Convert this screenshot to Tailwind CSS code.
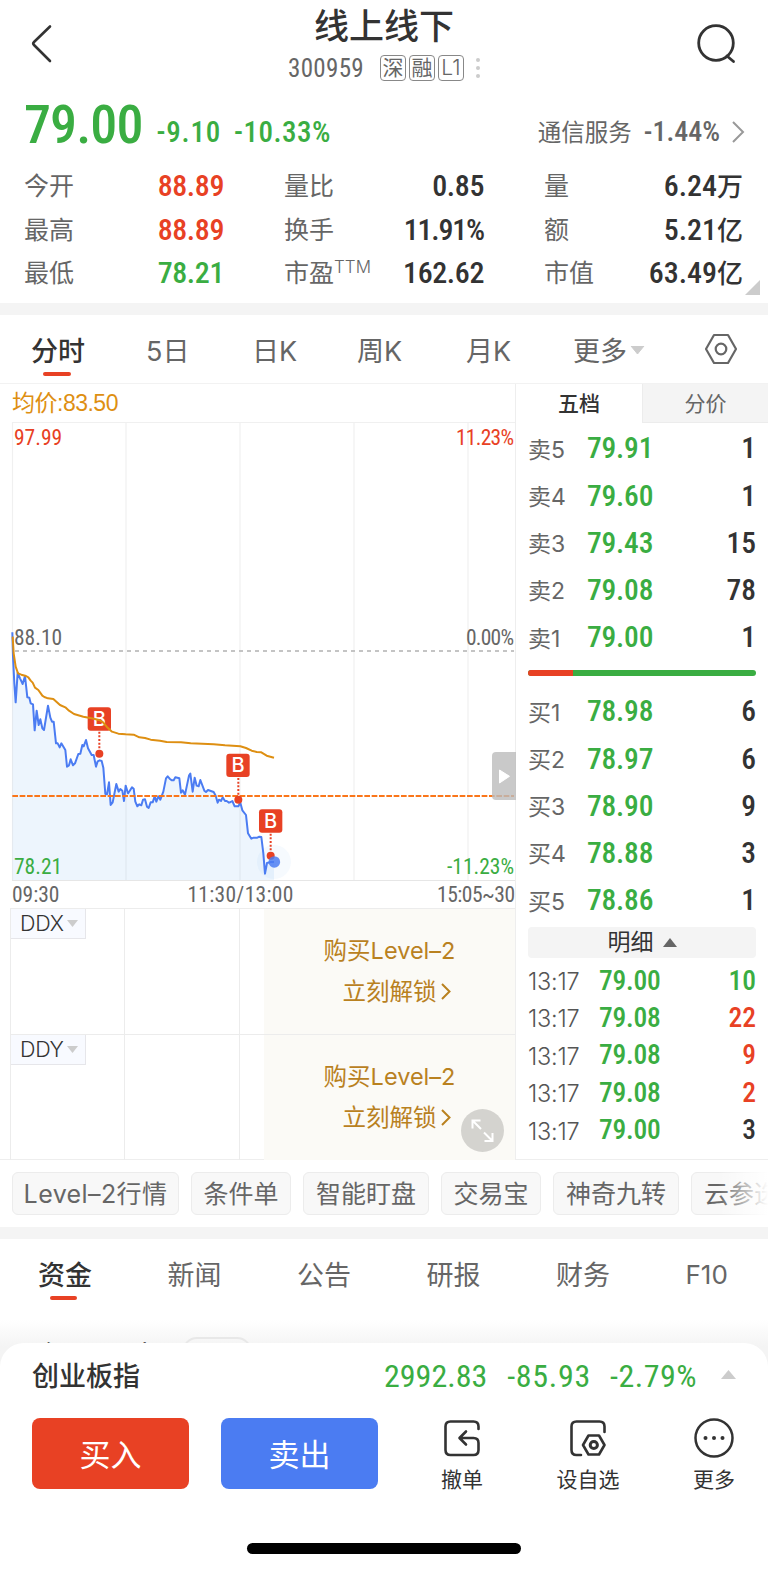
<!DOCTYPE html>
<html lang="zh-CN">
<head>
  <meta charset="UTF-8" />
  <meta name="viewport" content="width=device-width, initial-scale=1.0" />
  <title>线上线下 300959</title>
  <script src="https://cdn.jsdelivr.net/npm/@tailwindcss/browser@4"></script>
</head>
<body class="bg-white font-['Inter','Noto_Sans_CJK_SC',sans-serif] text-[#333]">
  <div class="w-[768px] h-[1570px] overflow-hidden relative">

    <!-- Kopf -->
    <header class="h-[90px] flex justify-between items-start pl-[30px] pr-[32px]">
      <svg class="w-[24px] h-[40px] mt-6" viewBox="0 0 24 40" fill="none" stroke="#333" stroke-width="2.6" stroke-linecap="round" stroke-linejoin="round"><path d="M20 2.500 L4 18 Q2.500 19.500 4 21 L20 37" /></svg>
      <div class="flex flex-col items-center ml-[18px]">
        <h1 class="text-[35px] leading-[52px] font-medium">线上线下</h1>
        <div class="flex items-center h-8 text-[#666]">
          <span class="font-['Roboto_Condensed'] text-[25px] tracking-[0.3px] pt-0.5 mr-[16px]">300959</span>
          <div class="flex gap-[3px] text-[21px] leading-[24px]">
            <span class="w-[26px] h-[26px] border border-[#888] rounded-[4px] flex justify-center">深</span>
            <span class="w-[26px] h-[26px] border border-[#888] rounded-[4px] flex justify-center">融</span>
            <span class="w-[26px] h-[26px] border border-[#888] rounded-[4px] flex justify-center font-light">L1</span>
          </div>
          <div class="flex flex-col gap-1 ml-[12px]">
            <i class="size-1 rounded-full bg-[#ccc]"></i>
            <i class="size-1 rounded-full bg-[#ccc]"></i>
            <i class="size-1 rounded-full bg-[#ccc]"></i>
          </div>
        </div>
      </div>
      <svg class="w-[40px] h-[40px] mt-6" viewBox="0 0 40 40" fill="none" stroke="#333" stroke-width="2.8" stroke-linecap="round"><circle cx="20" cy="19" r="17.3" /><path d="M31 32 L37.500 37.500" /></svg>
    </header>

    <!-- Kurs -->
    <section class="h-[213px] pl-[24px] pr-[25px] relative">
      <div class="h-[74px] flex items-end font-['Roboto_Condensed','Noto_Sans_CJK_SC',sans-serif] font-medium text-[#3aad42]">
        <span class="text-[54px] leading-[78px] tracking-[-0.9px]">79.00</span>
        <span class="text-[29px] leading-[64px] ml-[14px] tracking-[0.8px]">-9.10</span>
        <span class="text-[29px] leading-[64px] ml-[13px] tracking-[0.5px]">-10.33%</span>
        <div class="ml-auto flex items-center h-[64px] text-[#666] -mr-[2px]">
          <span class="text-[23.5px] font-normal pt-[3px]">通信服务</span>
          <span class="text-[28px] ml-[12px]">-1.44%</span>
          <svg class="w-[13px] h-[22px] ml-[12px]" viewBox="0 0 13 22" fill="none" stroke="#999" stroke-width="2"><path d="M1 1 L11 11 L1 21" /></svg>
        </div>
      </div>
      <div id="stats" class="grid grid-cols-[260px_260px_199px] auto-rows-[43.500px]"></div>
      <svg class="absolute right-2 bottom-[8px] w-[15px] h-[15px]" viewBox="0 0 15 15"><path d="M15 0 V15 H0 Z" fill="#ccc" /></svg>
    </section>

    <div class="h-3 bg-[#f4f4f4]"></div>

    <nav class="h-[69px] flex items-start pl-[31px] pt-[16px] text-[27px] leading-[42px] text-[#666] border-b border-[#f2f2f2]">
      <div class="w-[115px]">
        <div class="w-[54px] font-medium text-[#333]">分时<i class="block w-7 h-1 ml-[12px] -mt-px rounded-full bg-[#e84124]"></i></div>
      </div>
      <span class="w-[106px]">5日</span>
      <span class="w-[105px]">日K</span>
      <span class="w-[109px]">周K</span>
      <span class="w-[107px]">月K</span>
      <div class="w-[132px] flex items-center gap-[3px]">更多<svg class="w-[15px] h-[9px] -mt-[3px]" viewBox="0 0 15 9"><path d="M1 0 H14 L7.500 8 Z" fill="#ccc" stroke="#ccc" stroke-linejoin="round" /></svg></div>
      <svg class="w-[32px] h-[32px] mt-[2px]" viewBox="0 0 32 32" fill="none" stroke="#666" stroke-width="2.2" stroke-linejoin="round"><path d="M9 2 H23 L31 16 L23 30 H9 L1 16 Z" /><circle cx="16" cy="16" r="5.300" /></svg>
    </nav>

    <main class="flex h-[776px] border-b border-[#eee]">
      <!-- Chart -->
      <section class="w-[516px] border-r border-[#eee]">
        <p class="h-[38px] pl-3 text-[23px] leading-[38px] tracking-[-0.5px] text-[#de8f12] font-['Liberation_Sans','Noto_Sans_CJK_SC',sans-serif]">均价:83.50</p>
        <svg class="block w-[516px] h-[486px]" viewBox="0 422 516 486" font-family="Roboto Condensed" font-size="21.500">
          <g stroke="#f0f0f0" stroke-width="1.200" fill="none">
            <path d="M12.500 422 V881 M126 422 V881 M240 422 V881 M354 422 V881 M468 422 V881 M12 422.500 H515" />
            <path d="M12 880.500 H515" stroke="#e6e6e6" />
          </g>
          <path d="M15 651 H514" stroke="#c4c4c4" stroke-width="1.800" stroke-dasharray="4 4" />
          <g transform="translate(0 620) scale(.33333)" fill="none" stroke-linejoin="round">
            <path fill="#4b9ae8" fill-opacity=".1" d="M37 37 L39 110 43 190 47 247 53 158 60 175 68 192 75 168 82 232 88 233 92 250 99 253 104 331 110 272 116 315 121 298 127 325 132 330 144 257 151 293 156 305 161 305 168 370 173 370 179 382 184 370 196 390 201 440 207 436 212 418 219 436 225 430 235 402 241 401 247 375 251 379 258 360 264 385 275 405 281 405 288 440 293 424 299 421 305 423 310 443 316 522 321 523 327 487 332 555 338 547 349 492 356 515 361 507 367 512 372 543 377 497 384 520 389 513 396 502 401 506 406 545 412 559 418 553 424 556 429 539 435 538 441 560 446 564 452 547 458 547 464 529 469 545 475 529 481 539 490 515 498 475 503 469 509 476 515 481 521 481 526 472 538 475 543 518 548 511 555 524 567 467 571 461 578 515 584 473 590 497 596 499 601 480 613 512 618 516 624 510 641 516 647 527 653 548 657 539 663 543 668 532 675 543 680 543 687 548 692 546 697 543 704 559 715 559 721 548 727 571 738 585 744 640 754 656 761 653 772 653 778 650 784 651 790 700 795 761 801 729 812 726 822 726 V780 H37 Z" />
            <circle cx="822" cy="726" r="51" fill="#4b9ae8" fill-opacity=".05" />
            <path stroke="#4b7cf2" stroke-width="6" d="M37 37 L39 110 43 190 47 247 53 158 60 175 68 192 75 168 82 232 88 233 92 250 99 253 104 331 110 272 116 315 121 298 127 325 132 330 144 257 151 293 156 305 161 305 168 370 173 370 179 382 184 370 196 390 201 440 207 436 212 418 219 436 225 430 235 402 241 401 247 375 251 379 258 360 264 385 275 405 281 405 288 440 293 424 299 421 305 423 310 443 316 522 321 523 327 487 332 555 338 547 349 492 356 515 361 507 367 512 372 543 377 497 384 520 389 513 396 502 401 506 406 545 412 559 418 553 424 556 429 539 435 538 441 560 446 564 452 547 458 547 464 529 469 545 475 529 481 539 490 515 498 475 503 469 509 476 515 481 521 481 526 472 538 475 543 518 548 511 555 524 567 467 571 461 578 515 584 473 590 497 596 499 601 480 613 512 618 516 624 510 641 516 647 527 653 548 657 539 663 543 668 532 675 543 680 543 687 548 692 546 697 543 704 559 715 559 721 548 727 571 738 585 744 640 754 656 761 653 772 653 778 650 784 651 790 700 795 761 801 729 812 726 822 726" />
            <path stroke="#fa761a" stroke-width="6.500" stroke-dasharray="17 5" d="M37 528 H1542" />
            <!-- Kaufmarken -->
            <g fill="#e84124">
              <rect x="263" y="262" width="70" height="70" rx="9" />
              <rect x="679" y="401" width="70" height="70" rx="9" />
              <rect x="777" y="568" width="70" height="70" rx="9" />
              <circle cx="298" cy="401" r="12" />
              <circle cx="715" cy="539" r="12" />
              <circle cx="812" cy="707" r="12" />
            </g>
            <path stroke="#e84124" stroke-width="6" stroke-dasharray="6 5" d="M298 335 V392 M715 474 V530 M812 641 V698" />
            <g fill="#fff" font-family="Inter" font-size="60" font-weight="500" text-anchor="middle">
              <text x="298" y="318">B</text>
              <text x="714" y="457">B</text>
              <text x="812" y="624">B</text>
            </g>
            <path stroke="#de8f12" stroke-width="6" d="M38 50 L41 100 47 140 54 160 64 164 78 168 85 172 92 182 98 188 105 203 115 210 127 227 133 231 144 235 160 237 180 255 196 262 207 272 222 282 250 290 275 295 300 301 308 306 320 320 336 335 355 341 377 343 401 344 418 352 435 354 452 359 480 362 500 366 543 367 572 370 641 373 675 376 721 379 738 384 755 392 770 396 784 397 800 407 822 413" />
            <circle cx="823" cy="726" r="17.500" fill="#4b7cf2" fill-opacity=".85" />
          </g>
          <path d="M516 752 H496 Q492 752 492 756 V796 Q492 800 496 800 H516 Z" fill="#bbb" fill-opacity=".8" />
          <path d="M499.500 770 V783 L509.500 776.300 Z" fill="#fff" stroke="#fff" stroke-linejoin="round" />
          <text x="14" y="444.500" fill="#e84124">97.99</text>
          <text x="514" y="444.500" fill="#e84124" text-anchor="end" textLength="58">11.23%</text>
          <text x="14" y="644.500" fill="#666">88.10</text>
          <text x="514" y="644.500" fill="#666" text-anchor="end" textLength="48">0.00%</text>
          <text x="14" y="874" fill="#3aad42">78.21</text>
          <text x="514" y="874" fill="#3aad42" text-anchor="end">-11.23%</text>
          <text x="12" y="901.500" fill="#666">09:30</text>
          <text x="240.500" y="901.500" fill="#666" text-anchor="middle" letter-spacing=".3">11:30/13:00</text>
          <text x="515" y="901.500" fill="#666" text-anchor="end" textLength="78">15:05~30</text>
        </svg>

        <!-- Level-2 Indikatoren -->
        <div class="ml-[10px] border-l border-t border-[#ececec] h-[126px] flex">
          <div class="w-[114px] border-r border-[#ececec]">
            <div class="w-[75px] h-[30px] bg-[#f8faff] border-r border-b border-[#e6e6ea] flex items-center gap-[3px] pl-[9px] text-[21.5px] tracking-[-0.3px] font-light">DDX<svg class="w-[11px] h-[7px]" viewBox="0 0 11 7"><path d="M0 0 H11 L5.500 7 Z" fill="#ccc" /></svg></div>
          </div>
          <div class="w-[115px] border-r border-[#ececec]"></div>
          <div class="flex-1 ml-[24px] bg-[#fbfaf6] pt-[21px] text-center text-[23.5px] leading-[41px] text-[#b9811f]">
            <p>购买Level–2</p>
            <p class="pl-[14px]">立刻解锁<svg class="inline w-[10px] h-[17px] ml-1 -mt-1" viewBox="0 0 10 17" fill="none" stroke="#b9811f" stroke-width="2"><path d="M1 1 L8.500 8.500 L1 16" /></svg></p>
          </div>
        </div>
        <div class="ml-[10px] border-l border-t border-[#ececec] h-[126px] flex relative">
          <div class="w-[114px] border-r border-[#ececec]">
            <div class="w-[75px] h-[30px] bg-[#f8faff] border-r border-b border-[#e6e6ea] flex items-center gap-[3px] pl-[9px] text-[21.5px] tracking-[-0.3px] font-light">DDY<svg class="w-[11px] h-[7px]" viewBox="0 0 11 7"><path d="M0 0 H11 L5.500 7 Z" fill="#ccc" /></svg></div>
          </div>
          <div class="w-[115px] border-r border-[#ececec]"></div>
          <div class="flex-1 ml-[24px] bg-[#fbfaf6] pt-[21px] text-center text-[23.5px] leading-[41px] text-[#b9811f]">
            <p>购买Level–2</p>
            <p class="pl-[14px]">立刻解锁<svg class="inline w-[10px] h-[17px] ml-1 -mt-1" viewBox="0 0 10 17" fill="none" stroke="#b9811f" stroke-width="2"><path d="M1 1 L8.500 8.500 L1 16" /></svg></p>
          </div>
          <svg class="absolute right-[11px] bottom-[8px] w-[43px] h-[43px]" viewBox="0 0 43 43" fill="none" stroke="#fff" stroke-width="2"><circle cx="21.500" cy="21.500" r="21.500" fill="#d4d3cf" stroke="none" /><path d="M11.500 19.500 V11.500 H19.500 M11.500 11.500 L20 20 M31.500 24 V32 H23.500 M31.500 32 L23 23.500" /></svg>
        </div>
      </section>

      <!-- Orderbuch -->
      <section class="flex-1">
        <div class="flex h-[39px] text-[21px] leading-[40px] text-center">
          <div class="w-[126px] font-medium">五档</div>
          <div class="flex-1 bg-[#f4f4f4] border-l border-b border-[#ececec] text-[#666]">分价</div>
        </div>
        <div class="pl-3 pr-[12px]">
          <div id="asks" class="pt-[2px] h-[246px]"></div>
          <div class="h-[6px] mt-px rounded-full bg-[#3aad42] overflow-hidden"><div class="w-[45px] h-full bg-[#e84124]"></div></div>
          <div id="bids" class="pt-[12px] h-[251px]"></div>
          <div class="h-[31px] rounded-sm bg-[#f4f4f4] flex items-center justify-center gap-[9px] text-[23px]">明细<svg class="w-[14px] h-[9px]" viewBox="0 0 14 9"><path d="M0 9 L7 0 L14 9 Z" fill="#666" /></svg></div>
          <div id="ticks" class="pt-[3px]"></div>
        </div>
      </section>
    </main>

    <div class="h-[67px] pl-3 pt-3 flex gap-3 relative overflow-hidden text-[25px] leading-[42px] text-[#666] whitespace-nowrap">
      <span class="h-[43px] w-[167px] shrink-0 flex justify-center tracking-[0.4px] rounded-md border border-[#ececec] bg-[#f8f8f8]">Level–2行情</span>
      <span class="h-[43px] w-[100px] shrink-0 flex justify-center rounded-md border border-[#ececec] bg-[#f8f8f8]">条件单</span>
      <span class="h-[43px] w-[126px] shrink-0 flex justify-center rounded-md border border-[#ececec] bg-[#f8f8f8]">智能盯盘</span>
      <span class="h-[43px] w-[100px] shrink-0 flex justify-center rounded-md border border-[#ececec] bg-[#f8f8f8]">交易宝</span>
      <span class="h-[43px] w-[126px] shrink-0 flex justify-center rounded-md border border-[#ececec] bg-[#f8f8f8]">神奇九转</span>
      <span class="h-[43px] w-[126px] shrink-0 flex justify-center rounded-md border border-[#ececec] bg-[#f8f8f8]">云参选股</span>
      <div class="absolute right-0 top-0 w-[50px] h-full bg-linear-to-r from-white/0 to-white"></div>
    </div>

    <div class="h-3 bg-[#f4f4f4]"></div>

    <nav class="flex h-[81px] pl-[38px] pt-[16px] text-[27px] leading-[42px] text-[#666]">
      <div class="w-[129.500px]">
        <div class="w-[54px] font-medium text-[#333]">资金<i class="block w-[27px] h-1 ml-[12px] -mt-px rounded-full bg-[#e84124]"></i></div>
      </div>
      <span class="w-[129.500px]">新闻</span>
      <span class="w-[129.500px]">公告</span>
      <span class="w-[129.500px]">研报</span>
      <span class="w-[129.500px]">财务</span>
      <span class="text-[26px] -mt-px">F10</span>
    </nav>
    <div class="h-[60px] flex pl-[33px] pt-[14px] bg-linear-to-b from-white to-[#f4f4f4] to-45%">
      <span class="text-[30px] leading-[44px] tracking-[0.3px]">个股异动</span>
      <span class="w-[70px] h-[30px] mt-[3px] ml-[28px] rounded-full border-2 border-[#e8e8e8]"></span>
    </div>

    <!-- Fußleiste -->
    <footer class="absolute bottom-0 left-0 w-[768px] h-[227px] rounded-t-[24px] bg-white flex flex-col">
      <div class="h-[66px] pl-8 pr-[32px] flex items-center font-['Roboto_Condensed','Noto_Sans_CJK_SC',sans-serif] text-[32px] text-[#3aad42]">
        <span class="text-[27px] font-medium text-[#333] pt-0.5 mr-auto">创业板指</span>
        <span>2992.83</span>
        <span class="ml-[20px] tracking-[0.7px]">-85.93</span>
        <span class="ml-[19px] tracking-[0.5px]">-2.79%</span>
        <svg class="w-[15px] h-[9px] ml-[24px] -mt-[3px]" viewBox="0 0 15 9"><path d="M0 9 L7.500 0 L15 9 Z" fill="#ccc" /></svg>
      </div>
      <div class="flex pl-8 pt-2 text-[21px] leading-[30px]">
        <button class="w-[157px] h-[71px] mt-px pt-0.5 rounded-lg bg-[#e84124] text-white text-[31px]">买入</button>
        <button class="w-[157px] h-[71px] mt-px pt-0.5 ml-8 rounded-lg bg-[#4b7cf2] text-white text-[31px]">卖出</button>
        <div class="w-[84px] ml-[42px] flex flex-col items-center">
          <svg class="w-[40px] h-[40px] mt-px mb-[7px]" viewBox="0 0 40 40" fill="none" stroke="#333" stroke-width="2.6" stroke-linecap="round" stroke-linejoin="round"><path d="M36.500 11 V8.500 Q36.500 3.500 31.500 3.500 H8.500 Q3.500 3.500 3.500 8.500 V32 Q3.500 37 8.500 37 H31.500 Q36.500 37 36.500 32 V25 Q36.500 20 31.500 20 H18 M24 13.500 L17.500 20 L24 26.500" /></svg>
          撤单
        </div>
        <div class="w-[84px] ml-[42px] flex flex-col items-center">
          <svg class="w-[40px] h-[40px] mt-px mb-[7px]" viewBox="0 0 40 40" fill="none" stroke="#333" stroke-width="2.6" stroke-linecap="round" stroke-linejoin="round"><path d="M36.500 14 V8.500 Q36.500 3.500 31.500 3.500 H8.500 Q3.500 3.500 3.500 8.500 V32 Q3.500 37 8.500 37 H13" /><path d="M20.500 17.500 H31 L36.500 27 L31 36.500 H20.500 L15 27 Z" /><circle cx="25.800" cy="27" r="3.600" stroke-width="3" /></svg>
          设自选
        </div>
        <div class="w-[84px] ml-[42px] flex flex-col items-center">
          <svg class="w-[40px] h-[40px] mt-px mb-[7px]" viewBox="0 0 40 40"><circle cx="20" cy="20" r="18.500" fill="none" stroke="#333" stroke-width="2.500" /><g fill="#333"><circle cx="11.500" cy="20" r="2" /><circle cx="20" cy="20" r="2" /><circle cx="28.500" cy="20" r="2" /></g></svg>
          更多
        </div>
      </div>
      <div class="w-[274px] h-[11px] mt-auto mb-[16px] mx-auto rounded-full bg-black"></div>
    </footer>
  </div>

  <script>
    const RED = "text-[#e84124]";
    const GREEN = "text-[#3aad42]";
    const DARK = "text-[#333]";

    // Kennzahlen: Label, Wert, Einheit, Farbe
    const stats = [
      ["今开", "88.89", "", RED], ["量比", "0.85", "", DARK], ["量", "6.24", "万", DARK],
      ["最高", "88.89", "", RED], ["换手", "11.91%", "", DARK], ["额", "5.21", "亿", DARK],
      ["最低", "78.21", "", GREEN], ["市盈<sup class='text-[17px] font-light -top-[9px]'>TTM</sup>", "162.62", "", DARK], ["市值", "63.49", "亿", DARK]
    ];
    const asks = [["卖5", "79.91", "1"], ["卖4", "79.60", "1"], ["卖3", "79.43", "15"], ["卖2", "79.08", "78"], ["卖1", "79.00", "1"]];
    const bids = [["买1", "78.98", "6"], ["买2", "78.97", "6"], ["买3", "78.90", "9"], ["买4", "78.88", "3"], ["买5", "78.86", "1"]];
    const ticks = [["13:17", "79.00", "10", GREEN], ["13:17", "79.08", "22", RED], ["13:17", "79.08", "9", RED], ["13:17", "79.08", "2", RED], ["13:17", "79.00", "3", DARK]];

    document.getElementById('stats').innerHTML = stats.map(([label, value, unit, color], i) => `
      <div class="flex justify-between items-center ${i % 3 === 2 ? '' : 'pr-[60px]'}">
        <span class="text-[25px] text-[#666] pt-[2px]">${label}</span>
        <span class="font-['Roboto_Condensed','Noto_Sans_CJK_SC',sans-serif] font-medium text-[30px] ${value.includes('%') ? 'tracking-[-1.2px]' : unit ? '' : 'tracking-[-0.4px]'} ${color}">${value}<span class="text-[26px]">${unit}</span></span>
      </div>`).join("");

    const orderRow = ([label, price, amount]) => `
      <div class="h-[47.200px] flex items-center">
        <span class="w-[59px] text-[23px] text-[#666] pt-[3px]">${label}</span>
        <span class="font-['Roboto_Condensed'] font-medium text-[29.500px] tracking-[-0.2px] text-[#3aad42]">${price}</span>
        <span class="font-['Roboto_Condensed'] font-medium text-[29.500px] ml-auto">${amount}</span>
      </div>`;
    document.getElementById('asks').innerHTML = asks.map(orderRow).join("");
    document.getElementById('bids').innerHTML = bids.map(orderRow).join("");

    document.getElementById('ticks').innerHTML = ticks.map(([time, price, amount, color]) => `
      <div class="h-[37.400px] flex items-center">
        <span class="w-[71px] text-[23.500px] font-light tracking-[-0.2px] text-[#555] pt-1">${time}</span>
        <span class="font-['Roboto_Condensed'] font-medium text-[27.500px] tracking-[-0.2px] pt-px text-[#3aad42]">${price}</span>
        <span class="font-['Roboto_Condensed'] font-medium text-[27.500px] pt-px ml-auto ${color}">${amount}</span>
      </div>`).join("");
  </script>
</body>
</html>
